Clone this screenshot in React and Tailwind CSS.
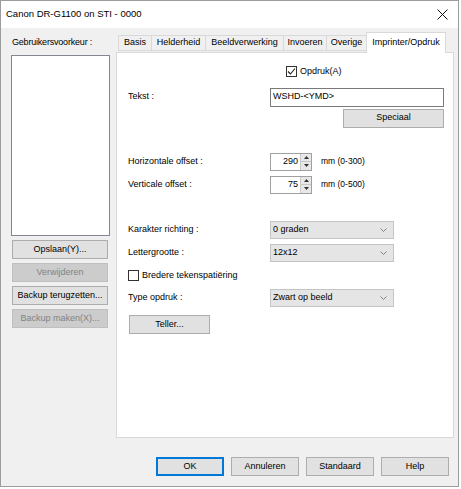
import React from "react";

const F = { fontFamily: '"Liberation Sans", Arial, sans-serif' };

function Btn({ children, w = "w-[96px]", disabled, focus, className = "" }) {
  return (
    <div
      className={`${w} h-[19px] flex items-center justify-center text-[9px] border ${
        focus
          ? "border-[#0078d7] shadow-[inset_0_0_0_1px_#0078d7] bg-[#e1e1e1] text-black"
          : disabled
          ? "border-[#bfbfbf] bg-[#cccccc] text-[#838383]"
          : "border-[#adadad] bg-[#e1e1e1] text-black"
      } ${className}`}
    >
      {children}
    </div>
  );
}

function Check({ checked, label, className = "" }) {
  return (
    <div className={`flex items-center gap-[3px] ${className}`}>
      <div className="w-[11px] h-[11px] border border-[#333] bg-white flex items-center justify-center">
        {checked && (
          <svg width="9" height="9" viewBox="0 0 9 9">
            <path d="M1 4.5 L3.5 7 L8 1.5" stroke="#222" strokeWidth="1.1" fill="none" />
          </svg>
        )}
      </div>
      <span className="text-[9px]">{label}</span>
    </div>
  );
}

function Select({ value }) {
  return (
    <div className="w-[124px] h-[18px] border border-[#c4c4c4] bg-[#e5e5e5] flex items-center justify-between pl-[2px] pr-[6px] text-[9px]">
      <span>{value}</span>
      <svg width="7" height="4" viewBox="0 0 7 4">
        <path d="M0.5 0.5 L3.5 3.5 L6.5 0.5" stroke="#777" strokeWidth="0.9" fill="none" />
      </svg>
    </div>
  );
}

function Spin({ value }) {
  return (
    <div className="flex h-[18px] w-[42px] border border-[#a0a0a0] bg-white">
      <div className="flex-1 flex items-center justify-end pr-[2px] text-[9px]">{value}</div>
      <div className="w-[11px] flex flex-col border-l border-[#c8c8c8] bg-[#e8e8e8]">
        <div className="flex-1 flex items-center justify-center border-b border-[#c8c8c8]">
          <svg width="5" height="3" viewBox="0 0 5 3"><path d="M0 3 L2.5 0 L5 3 Z" fill="#333" /></svg>
        </div>
        <div className="flex-1 flex items-center justify-center">
          <svg width="5" height="3" viewBox="0 0 5 3"><path d="M0 0 L2.5 3 L5 0 Z" fill="#333" /></svg>
        </div>
      </div>
    </div>
  );
}

function Row({ label, children, className = "" }) {
  return (
    <div className={`flex items-center ${className}`}>
      <div className="w-[142px] text-[9px]">{label}</div>
      {children}
    </div>
  );
}

export default function App() {
  const tabs = [
    ["Basis", "w-[33px]"],
    ["Helderheid", "w-[54px]"],
    ["Beeldverwerking", "w-[78px]"],
    ["Invoeren", "w-[43px]"],
    ["Overige", "w-[40px]"],
  ];
  return (
    <div className="w-[461px] h-[489px] bg-white text-black" style={F}>
      <div className="w-[459px] h-[487px] border border-[#9c9c9c] flex flex-col">
        {/* title bar */}
        <div className="h-[27px] bg-white flex items-center justify-between pl-[5px] pr-[10px]">
          <span className="text-[9.5px]">Canon DR-G1100 on STI - 0000</span>
          <svg width="11" height="11" viewBox="0 0 11 11">
            <path d="M0.5 0.5 L10.5 10.5 M10.5 0.5 L0.5 10.5" stroke="#111" strokeWidth="1" />
          </svg>
        </div>
        {/* body */}
        <div className="flex-1 bg-[#f0f0f0] flex flex-col">
          <div className="flex">
            {/* left column */}
            <div className="ml-[10px] w-[99px] flex flex-col">
              <div className="text-[9px] mt-[9px] ml-[1px] h-[11px] leading-[11px] tracking-[-0.2px]">Gebruikersvoorkeur :</div>
              <div className="mt-[7px] h-[181px] border border-[#828790] bg-white" />
              <div className="flex flex-col gap-[4px] mt-[4px] ml-[1px]">
                <Btn>Opslaan(Y)...</Btn>
                <Btn disabled>Verwijderen</Btn>
                <Btn>Backup terugzetten...</Btn>
                <Btn disabled>Backup maken(X)...</Btn>
              </div>
            </div>
            {/* right column */}
            <div className="ml-[6px] w-[338px] flex flex-col mt-[4px]">
              <div className="flex items-end h-[20px] pl-[2px] relative z-10">
                {tabs.map(([t, w]) => (
                  <div
                    key={t}
                    className={`${w} h-[16px] border border-[#d9d9d9] border-r-0 bg-[#f0f0f0] text-[9px] flex items-center justify-center mb-[1px]`}
                  >
                    {t}
                  </div>
                ))}
                <div className="w-[80px] h-[21px] border border-[#d9d9d9] border-b-0 bg-white text-[9px] flex items-start justify-center pt-[3px] -mb-[1px]">
                  Imprinter/Opdruk
                </div>
              </div>
              <div className="h-[386px] border border-[#d9d9d9] bg-white flex flex-col pl-[11px]">
                <Check checked label="Opdruk(A)" className="ml-[158px] mt-[12px]" />
                <Row label="Tekst :" className="mt-[9px]">
                  <div className="w-[174px] h-[19px] border border-[#7a7a7a] bg-white flex items-center pl-[2px] text-[9px]">
                    WSHD-&lt;YMD&gt;
                  </div>
                </Row>
                <div className="flex justify-end w-[316px] mt-[2px]">
                  <Btn w="w-[101px]">Speciaal</Btn>
                </div>
                <Row label="Horizontale offset :" className="mt-[25px]">
                  <Spin value="290" />
                  <span className="ml-[9px] text-[8.5px]">mm (0-300)</span>
                </Row>
                <Row label="Verticale offset :" className="mt-[5px]">
                  <Spin value="75" />
                  <span className="ml-[9px] text-[8.5px]">mm (0-500)</span>
                </Row>
                <Row label="Karakter richting :" className="mt-[27px]">
                  <Select value="0 graden" />
                </Row>
                <Row label="Lettergrootte :" className="mt-[5px]">
                  <Select value="12x12" />
                </Row>
                <Check label="Bredere tekenspatiëring" className="mt-[7px]" />
                <Row label="Type opdruk :" className="mt-[7px]">
                  <Select value="Zwart op beeld" />
                </Row>
                <div className="mt-[8px] ml-[1px]">
                  <Btn w="w-[81px]">Teller...</Btn>
                </div>
              </div>
            </div>
          </div>
          {/* bottom buttons */}
          <div className="flex justify-end gap-[7px] pr-[9px] mt-[19px]">
            <Btn w="w-[68px]" focus>OK</Btn>
            <Btn w="w-[68px]">Annuleren</Btn>
            <Btn w="w-[68px]">Standaard</Btn>
            <Btn w="w-[68px]">Help</Btn>
          </div>
        </div>
      </div>
    </div>
  );
}
